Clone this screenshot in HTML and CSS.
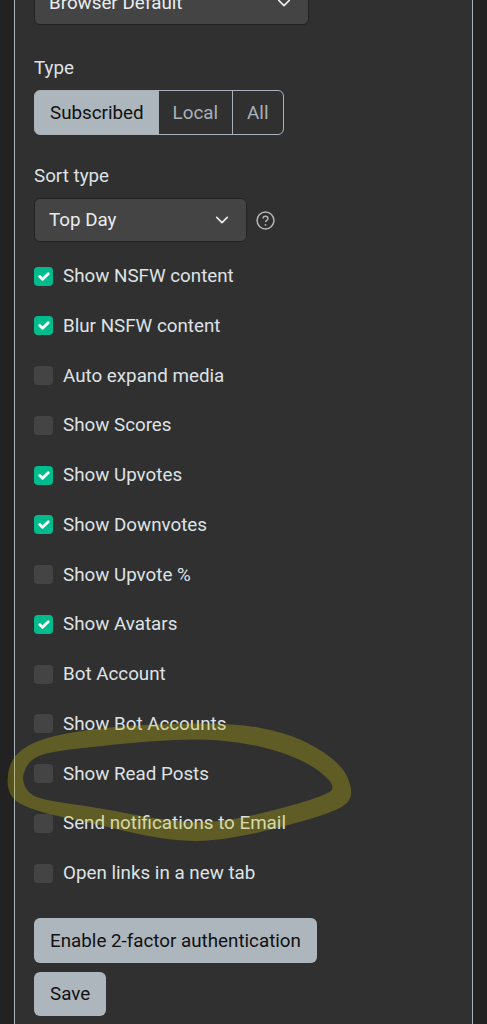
FILE: index.html
```html
<!DOCTYPE html>
<html lang="en">
<head>
  <meta charset="UTF-8">
  <meta name="viewport" content="width=device-width, initial-scale=1.0">
  <title>Settings</title>
  <link rel="stylesheet" href="styles.css">
</head>
<body>
  <div class="card">
    <form class="settings">
      <select class="select select-wide">
        <option>Browser Default</option>
      </select>

      <div class="field field-type">
        <div class="field-label">Type</div>
        <div class="btn-group">
          <button type="button" class="group-btn active">Subscribed</button>
          <button type="button" class="group-btn">Local</button>
          <button type="button" class="group-btn">All</button>
        </div>
      </div>

      <div class="field field-sort">
        <div class="field-label">Sort type</div>
        <div class="select-row">
          <select class="select select-sort">
            <option>Top Day</option>
          </select>
          <svg class="help-icon" viewBox="0 0 18 18" width="19" height="19">
            <circle cx="9" cy="9" r="8" fill="none" stroke="#b4b4b4" stroke-width="1.4"/>
            <path d="M6.7 7.1c0-1.3 1-2.1 2.3-2.1s2.3.8 2.3 2c0 1.8-2.3 1.8-2.3 3.5" fill="none" stroke="#b4b4b4" stroke-width="1.4"/>
            <circle cx="9" cy="13.1" r="0.9" fill="#b4b4b4"/>
          </svg>
        </div>
      </div>

      <div class="checks">
        <label class="check"><input type="checkbox" checked><span>Show NSFW content</span></label>
        <label class="check"><input type="checkbox" checked><span>Blur NSFW content</span></label>
        <label class="check"><input type="checkbox"><span>Auto expand media</span></label>
        <label class="check"><input type="checkbox"><span>Show Scores</span></label>
        <label class="check"><input type="checkbox" checked><span>Show Upvotes</span></label>
        <label class="check"><input type="checkbox" checked><span>Show Downvotes</span></label>
        <label class="check"><input type="checkbox"><span>Show Upvote %</span></label>
        <label class="check"><input type="checkbox" checked><span>Show Avatars</span></label>
        <label class="check"><input type="checkbox"><span>Bot Account</span></label>
        <label class="check"><input type="checkbox"><span>Show Bot Accounts</span></label>
        <label class="check"><input type="checkbox"><span>Show Read Posts</span></label>
        <label class="check"><input type="checkbox"><span>Send notifications to Email</span></label>
        <label class="check"><input type="checkbox"><span>Open links in a new tab</span></label>
      </div>

      <div class="actions">
        <button type="button" class="btn">Enable 2-factor authentication</button>
        <button type="button" class="btn">Save</button>
      </div>
    </form>
  </div>

  <!-- hand drawn highlight on top of the screenshot -->
  <svg class="scribble" viewBox="0 0 487 1024" width="487" height="1024">
    <path fill-rule="evenodd" d="M8 786.5 Q7 780 8.5 771.5 Q10 763 15 756.5 Q20 750 31.5 744 Q43 738 66.5 733.5 Q90 729 120 726.5 Q150 724 191.5 723.5 Q233 723 258 727.5 Q283 732 300 739.5 Q317 747 330 757 Q343 767 347.5 777.5 Q352 788 351 795 Q350 802 341.5 807 Q333 812 308 819.5 Q283 827 258 832.5 Q233 838 213 840 Q193 842 171.5 839.5 Q150 837 125 831 Q100 825 71.5 819 Q43 813 30 808 Q17 803 13 798 Q9 793 8 786.5 Z M25 786.5 Q22 780 23.5 774 Q25 768 29 763 Q33 758 41.5 755 Q50 752 70 749.5 Q90 747 120 744 Q150 741 175 740 Q200 739 220 740.5 Q240 742 261.5 747 Q283 752 300 760 Q317 768 327 778 Q337 788 328.5 792.5 Q320 797 301.5 802.5 Q283 808 258 814 Q233 820 213 821.5 Q193 823 171.5 820.5 Q150 818 125 813 Q100 808 71.5 804 Q43 800 35.5 796.5 Q28 793 25 786.5 Z"/>
  </svg>
</body>
</html>
```

FILE: styles.css
```css
html, body {
  height: 100%;
}

body {
  margin: 0;
  background: #222;
  color: #dee2e6;
  font-family: Roboto, "Liberation Sans", sans-serif;
  font-size: 18.8px;
  overflow: hidden;
  position: relative;
}

.card {
  margin: -60px 14px 0;
  height: 1084px;
  background: #303030;
  border: 1px solid #a9b2ba;
  border-top: 0;
  border-bottom: 0;
  box-sizing: border-box;
}

.settings {
  padding: 41px 19px 0;
}

.select {
  display: block;
  height: 44px;
  padding: 0 14px;
  background-color: #444;
  background-image: url("data:image/svg+xml,%3Csvg xmlns='http://www.w3.org/2000/svg' viewBox='0 0 16 16'%3E%3Cpath fill='none' stroke='%23e8e8e8' stroke-linecap='round' stroke-linejoin='round' stroke-width='2' d='M2 5l6 6 6-6'/%3E%3C/svg%3E");
  background-repeat: no-repeat;
  background-position: right 15px center;
  background-size: 18px 14px;
  border: 1px solid #222;
  border-radius: 6px;
  color: #e9ecef;
  font-family: inherit;
  font-size: 18.8px;
  appearance: none;
}

.select-wide {
  width: 275px;
}

.select-sort {
  width: 213px;
}

.field-type {
  margin-top: 31px;
}

.field-sort {
  margin-top: 29px;
}

.field-label {
  line-height: 24px;
  margin-bottom: 10px;
  color: #dee2e6;
}

.btn-group {
  display: inline-flex;
  height: 45px;
}

.group-btn {
  padding: 0 14px;
  margin-left: -1px;
  background: transparent;
  border: 1px solid #a9b2ba;
  color: #a9b2ba;
  font-family: inherit;
  font-size: 18.8px;
}

.group-btn:first-child {
  margin-left: 0;
  padding: 0 14px 0 15px;
  border-radius: 6px 0 0 6px;
}

.group-btn:last-child {
  padding: 0 15px 0 14px;
  border-radius: 0 6px 6px 0;
}

.group-btn.active {
  background: #adb5bd;
  color: #111;
}

.select-row {
  display: flex;
  align-items: center;
  gap: 9px;
}

.checks {
  margin-top: 9.25px;
}

.check {
  display: flex;
  align-items: center;
  gap: 10px;
  height: 49.75px;
  color: #dee2e6;
}

.check input {
  width: 19px;
  height: 19px;
  margin: 0;
  background: #444;
  border-radius: 4px;
  appearance: none;
}

.check input:checked {
  background-color: #00bc8c;
  background-image: url("data:image/svg+xml,%3Csvg xmlns='http://www.w3.org/2000/svg' viewBox='0 0 20 20'%3E%3Cpath fill='none' stroke='%23fff' stroke-linecap='round' stroke-linejoin='round' stroke-width='3' d='M6 10l3 3 6-6'/%3E%3C/svg%3E");
  background-size: 100% 100%;
}

.actions {
  display: flex;
  flex-direction: column;
  align-items: flex-start;
  gap: 9px;
  margin-top: 20.25px;
}

.btn {
  height: 44.5px;
  padding: 0 16px;
  background: #adb5bd;
  border: 0;
  border-radius: 6px;
  color: #111;
  font-family: inherit;
  font-size: 18.8px;
}

.scribble {
  position: absolute;
  top: 0;
  left: 0;
  pointer-events: none;
}

.scribble path {
  fill: #cdc312;
  fill-opacity: 0.3;
}
```
